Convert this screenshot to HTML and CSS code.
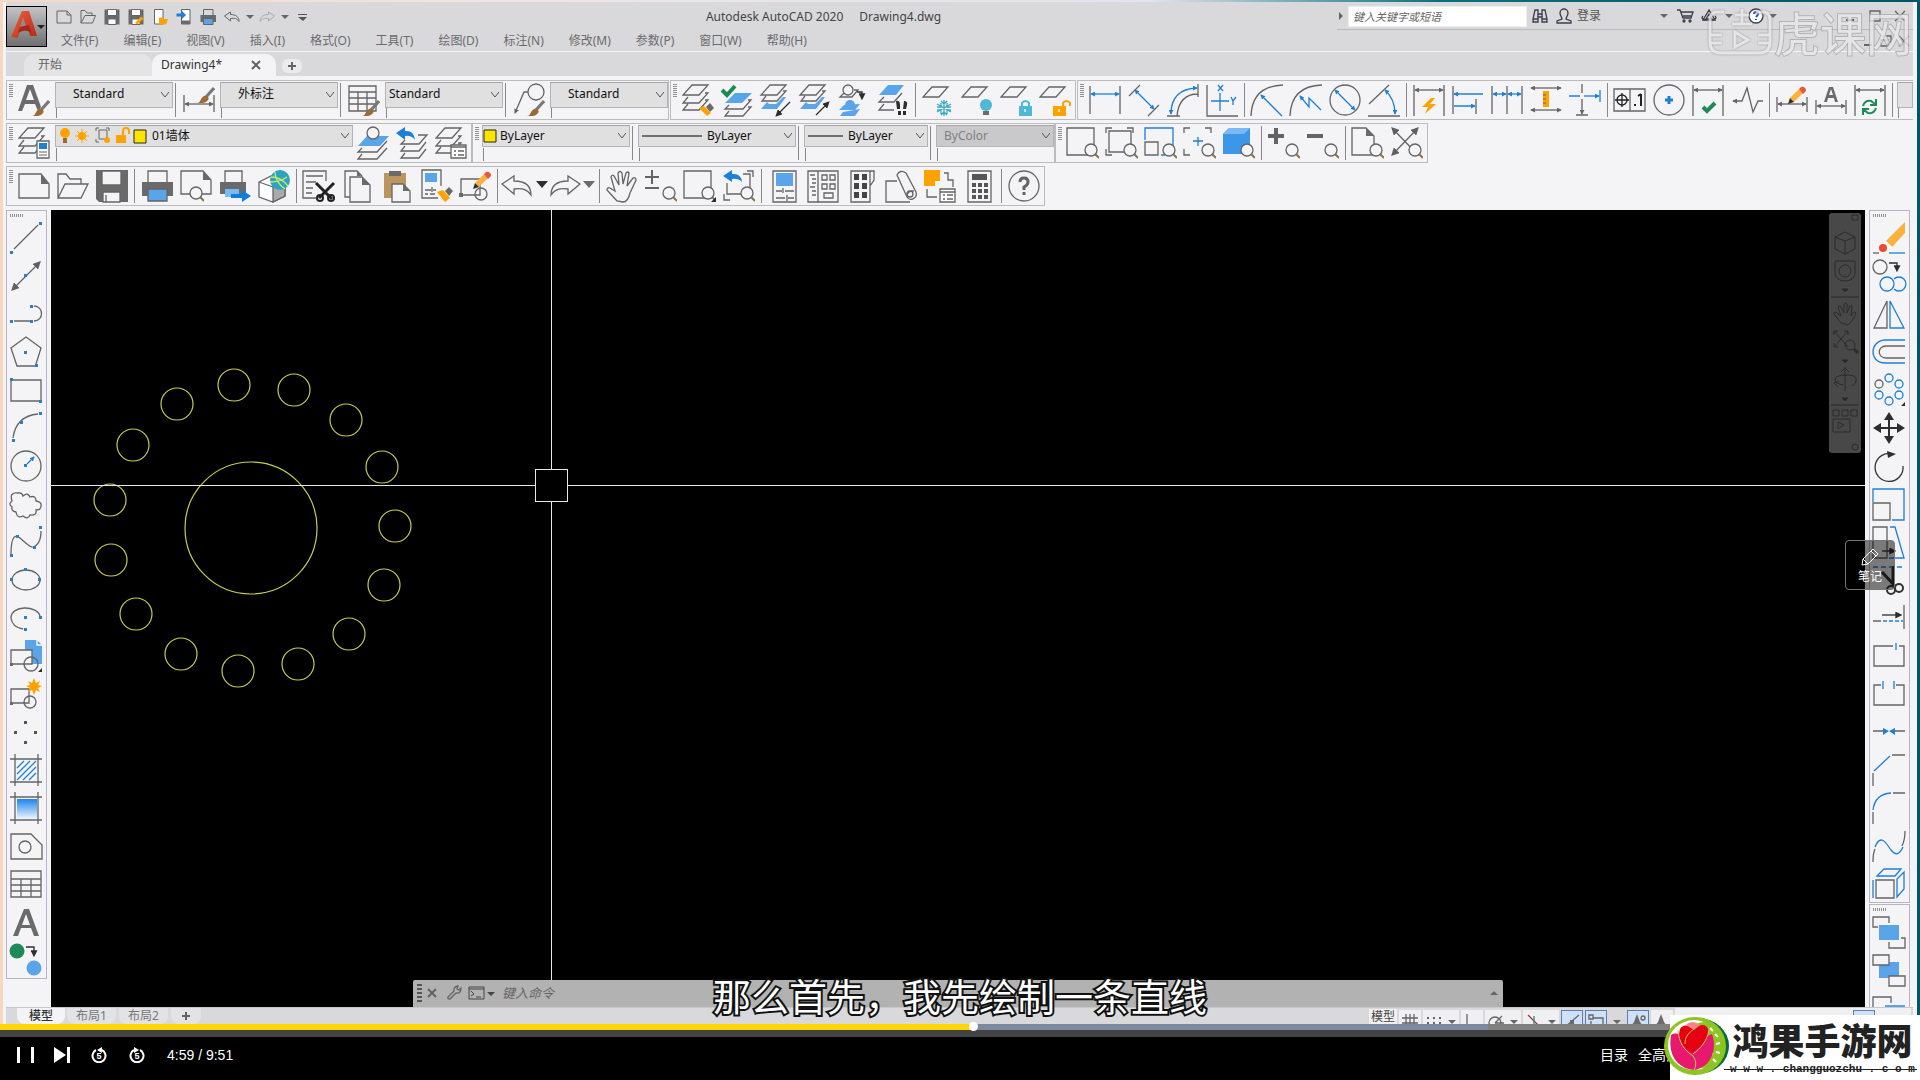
FILE: index.html
```html
<!DOCTYPE html>
<html lang="zh-CN">
<head>
<meta charset="utf-8">
<title>Autodesk AutoCAD 2020 - Drawing4.dwg</title>
<link rel="stylesheet" href="styles.css">
</head>
<body>
<svg class="defs" aria-hidden="true">
  <defs>
    <marker id="ab" viewBox="0 0 6 6" refX="5" refY="3" markerWidth="5" markerHeight="5" markerUnits="userSpaceOnUse" orient="auto-start-reverse"><path d="M0 0L6 3L0 6z" fill="#1c7fd8" stroke="none"/></marker>
    <marker id="ag" viewBox="0 0 6 6" refX="5" refY="3" markerWidth="5" markerHeight="5" markerUnits="userSpaceOnUse" orient="auto-start-reverse"><path d="M0 0L6 3L0 6z" fill="#646464" stroke="none"/></marker>
    <marker id="ak" viewBox="0 0 6 6" refX="4" refY="3" markerWidth="7" markerHeight="7" markerUnits="userSpaceOnUse" orient="auto-start-reverse"><path d="M0 0L6 3L0 6z" fill="#2d2d2d" stroke="none"/></marker>
    <marker id="am" viewBox="0 0 6 6" refX="4" refY="3" markerWidth="8" markerHeight="8" markerUnits="userSpaceOnUse" orient="auto-start-reverse"><path d="M0 0L6 3L0 6z" fill="#606060" stroke="none"/></marker>
    <linearGradient id="grad" x1="0" y1="0" x2="0" y2="1"><stop offset="0" stop-color="#1c86ee"/><stop offset="1" stop-color="#eef5fd"/></linearGradient>
    <linearGradient id="red" x1="0" y1="0" x2="1" y2="1"><stop offset="0" stop-color="#f0603c"/><stop offset="1" stop-color="#b52a1a"/></linearGradient>
  </defs>
  <symbol id="mag" viewBox="0 0 32 32"><circle cx="24" cy="23" r="6" fill="#f4f4f6"/><path d="M28 27l1 1"/><path d="M28 27l4 4" stroke="#8a7350" stroke-width="2"/></symbol>
  <symbol id="stack" viewBox="0 0 32 32"><path d="M10 1h16l-9 10H1zM6 13l-5 6h16l9-10h-3M6 20l-5 6h16l9-10h-3"/></symbol>
  <symbol id="brush" viewBox="0 0 32 32"><path d="M31 17l-8 9" stroke="#777" stroke-width="3"/><path d="M14 32c4 0 3-5 7-7c3-1 6 2 4 4c-3 4-8 3-11 3z" fill="#9b6a35" stroke="none"/></symbol>
  <symbol id="sheet" viewBox="0 0 32 32"><path d="M10 3h16l-9 10H1z"/></symbol>
  <symbol id="printer" viewBox="0 0 32 32"><path d="M7 13V1h19v12"/><path d="M1 12h31v14h-6v-7H7v7H1z" class="g"/><path d="M7 19h19v12H7z" fill="#5aa5ea"/></symbol>
  <symbol id="pencil" viewBox="0 0 32 32"><path d="M13 12l9-9 4 4-9 9z" fill="#fbb23c" stroke="none"/><path d="M22 3l2-2q2-1 4 1t0 4l-2 2z" fill="#e9553f" stroke="none"/><path d="M13 12l4 4-6 2z" class="k"/></symbol>
  <symbol id="undo" viewBox="0 0 32 32"><path d="M1 14L13 6v5c11 0 17 5 17 14c-4-6-9-7-17-6v5z"/></symbol>
  <symbol id="tri" viewBox="0 0 8 8"><path d="M0 2h8L4 6z" fill="currentColor" stroke="none"/></symbol>
  <symbol id="clock" viewBox="0 0 16 16"><path d="M5 3A6.500 6.500 0 1 0 11 3" fill="none" stroke="#fff" stroke-width="2"/><path d="M11 0v6L6 3z" fill="#fff" stroke="none"/></symbol>
</svg>

<main class="app">
  <header class="titlebar">
    <button class="logo" aria-label="应用程序菜单"><svg viewBox="0 0 39 39"><path d="M4 30L15 4h7l8 25h-7l-2-7-8 1-2 8z" fill="url(#red)"/><path d="M16 10l3 9-6 1z" fill="#8d8d8f"/><path d="M13 20l9-2 3 9c-4-4-8-4-14-1z" fill="#a52a1c"/><path d="M30 18h8l-4 4z" fill="#222"/></svg></button>
    <div class="bars">
      <div class="topbar">
        <nav class="qat">
          <button aria-label="新建"><svg class="i s" viewBox="0 0 32 32"><path d="M2 4h20l8 8v16H2zM22 4v8h8"/></svg></button>
          <button aria-label="打开"><svg class="i s" viewBox="0 0 32 32"><path d="M2 28V3h8l4 5h10v5M2 28l8-15h21l-6 15z"/></svg></button>
          <button aria-label="保存"><svg class="i s" viewBox="0 0 32 32"><path d="M1 1h30v30H1z" class="g"/><path d="M7 1h18v12H7zM8 20h16v11H8z" fill="#fff"/></svg></button>
          <button aria-label="另存为"><svg class="i s" viewBox="0 0 32 32"><path d="M1 1h30v30H1z" class="g"/><path d="M7 1h18v12H7zM8 20h16v11H8z" fill="#fff"/><path d="M14 28l12-13 5 4-12 12z" class="o"/></svg></button>
          <button aria-label="从移动设备打开"><svg class="i s" viewBox="0 0 32 32"><path d="M5 1h17v29H5z" fill="#fff"/><path d="M14 17h6l2 3h10l-4 11H14z" class="o"/></svg></button>
          <button aria-label="保存到移动设备"><svg class="i s" viewBox="0 0 32 32"><path d="M11 1h17v29H11z" fill="#fff"/><path d="M11 23h17v7H11z" class="g"/><path d="M1 9h11V4l8 8-8 8v-5H1z" fill="#1c7fd8" stroke="none"/></svg></button>
          <button aria-label="打印"><svg class="i s"><use href="#printer"/></svg></button>
          <button aria-label="放弃"><svg class="i s"><use href="#undo"/></svg></button>
          <button class="mini" aria-label="放弃列表"><svg class="t"><use href="#tri"/></svg></button>
          <button class="dim" aria-label="重做"><svg class="i s flip"><use href="#undo"/></svg></button>
          <button class="mini" aria-label="重做列表"><svg class="t"><use href="#tri"/></svg></button>
          <button aria-label="自定义"><svg class="i s" viewBox="0 0 16 16"><path d="M4 5h9v1H4zM4 8h9l-4 4z" fill="#555" stroke="none"/></svg></button>
        </nav>
        <h1 class="title"><span>Autodesk AutoCAD 2020</span><span>Drawing4.dwg</span></h1>
        <div class="info">
          <svg class="t turn"><use href="#tri"/></svg>
          <input class="search" type="text" aria-label="搜索" placeholder="键入关键字或短语">
          <button aria-label="搜索"><svg class="i s n" viewBox="0 0 16 16"><path d="M3 2h3v4h4V2h3l2 9v3h-5V9H6v5H1v-3z"/><path d="M1 11h5M10 11h5M6 6v3M10 6v3"/></svg></button>
          <button class="login"><svg class="i s n" viewBox="0 0 16 16"><path d="M8 1a4 4 0 0 1 4 4c0 3-2 4-2 6l5 2v2H1v-2l5-2c0-2-2-3-2-6a4 4 0 0 1 4-4z"/></svg>登录</button>
          <svg class="t"><use href="#tri"/></svg>
          <div class="apps">
            <button aria-label="购物车"><svg class="i s n" viewBox="0 0 16 16"><path d="M0 2h3l3 8h8l2-6H4M6 8h8"/><circle cx="7" cy="13" r="1"/><circle cx="13" cy="13" r="1"/></svg></button>
            <button aria-label="Autodesk A360"><svg class="i s n" viewBox="0 0 16 16"><path d="M8 2l6 10H2zM8 6l3 5H5z"/><path d="M2 8q-3 3 3 4M14 8q3 3-3 4"/></svg></button>
            <svg class="t"><use href="#tri"/></svg>
          </div>
          <button aria-label="帮助" class="help"><svg class="i s n" viewBox="0 0 16 16"><circle cx="8" cy="8" r="7" fill="#fff"/><path d="M6 6q0-2 2-2t2 2q0 1-2 3M8 11v1" stroke="#2b5cb5" stroke-width="2"/></svg></button>
          <svg class="t"><use href="#tri"/></svg>
          <div class="win">
            <button aria-label="最小化"><svg class="i x" viewBox="0 0 12 12"><path d="M2 10h8" stroke-width="2"/></svg></button>
            <button aria-label="最大化"><svg class="i x" viewBox="0 0 12 12"><path d="M1 1h10v10H1z"/></svg></button>
            <button aria-label="关闭"><svg class="i x" viewBox="0 0 12 12"><path d="M1 1l10 10M11 1L1 11"/></svg></button>
          </div>
        </div>
      </div>
      <nav class="menu">
        <button>文件(F)</button><button>编辑(E)</button><button>视图(V)</button><button>插入(I)</button><button>格式(O)</button><button>工具(T)</button><button>绘图(D)</button><button>标注(N)</button><button>修改(M)</button><button>参数(P)</button><button>窗口(W)</button><button>帮助(H)</button>
        <div class="mdi">
          <button aria-label="最小化图形"><svg class="i x" viewBox="0 0 12 12"><path d="M2 10h8" stroke-width="2"/></svg></button>
          <button aria-label="还原图形"><svg class="i x" viewBox="0 0 12 12"><path d="M1 5h7v6H1zM4 5V1h7v6H8"/></svg></button>
          <button aria-label="关闭图形"><svg class="i x" viewBox="0 0 12 12"><path d="M1 1l10 10M11 1L1 11"/></svg></button>
        </div>
      </nav>
    </div>
  </header>

  <nav class="tabs">
    <button class="tab">开始</button>
    <button class="tab on"><span>Drawing4*</span><svg class="i x" viewBox="0 0 12 12"><path d="M2 2l8 8M10 2l-8 8" stroke-width="2"/></svg></button>
    <button class="add" aria-label="新图形"><svg class="i x" viewBox="0 0 12 12"><path d="M6 2v8M2 6h8" stroke-width="2"/></svg></button>
  </nav>

  <section class="docks">
    <div class="row">
      <div class="bar">
        <i class="grip"></i>
        <button class="tb" aria-label="文字样式"><svg class="i" viewBox="0 0 32 32"><path d="M0 27L9 1h6l8 22-3 4-3-7H7l-3 7zM8 16h8L12 5z" class="g"/><use href="#brush"/></svg></button>
        <div class="combo w119 p18"><select aria-label="文字样式"><option>Standard</option></select></div><i class="sep w7"></i>
        <button class="tb" aria-label="标注样式"><svg class="i" viewBox="0 0 32 32"><path d="M1 11v17M31 11v17"/><path d="M2 20h28" class="ag2"/><g transform="translate(0 -13)"><use href="#brush"/></g></svg></button>
        <div class="combo w119 p18"><select aria-label="标注样式"><option>外标注</option></select></div><i class="sep w7"></i>
        <button class="tb" aria-label="表格样式"><svg class="i" viewBox="0 0 32 32"><path d="M1 2h27v25H1zM1 8h27M1 14h27M1 20h27M10 8v19M19 8v19"/><use href="#brush"/></svg></button>
        <div class="combo w119 p4"><select aria-label="表格样式"><option>Standard</option></select></div><i class="sep w7"></i>
        <button class="tb" aria-label="多重引线样式"><svg class="i" viewBox="0 0 32 32"><circle cx="23" cy="8" r="8"/><path d="M15 8h-4L2 29" class="ag1"/><use href="#brush"/></svg></button>
        <div class="combo w119 p18"><select aria-label="多重引线样式"><option>Standard</option></select></div>
      </div>
      <div class="bar">
        <i class="grip"></i>
        <button class="tb" aria-label="图层匹配"><svg class="i" viewBox="0 0 32 32"><use href="#stack"/><path d="M24 23l4-4 4 5-4 4z" class="g"/><path d="M17 24l5-2 7 7-4 3z" class="o"/></svg></button>
        <button class="tb" aria-label="置为当前"><svg class="i" viewBox="0 0 32 32"><path d="M1 6l5 5 8-9" stroke="#1e8a5a" stroke-width="4"/><path d="M14 9h17L21 19H4z" class="f"/><path d="M8 21l-4 4h18l8-9h-3M8 27l-4 5h18l8-9h-3"/></svg></button>
        <button class="tb" aria-label="上一个"><svg class="i" viewBox="0 0 32 32"><path d="M10 1h16l-9 10H1zM6 12l-4 5h15l9-10h-3"/><path d="M7 18l-6 7h16l9-12h-3l-7 7H9z" class="f"/><path d="M30 18L17 31" class="ak1"/></svg></button>
        <button class="tb" aria-label="更改为当前图层"><svg class="i" viewBox="0 0 32 32"><path d="M10 1h16l-9 10H1zM6 12l-4 5h15l9-10h-3"/><path d="M7 18l-6 7h16l9-12h-3l-7 7H9z" class="f"/><path d="M17 31l12-12" class="ak1"/></svg></button>
        <button class="tb" aria-label="复制到新图层"><svg class="i" viewBox="0 0 32 32"><circle cx="10" cy="6" r="5"/><path d="M6 9l-4 4h12l6-7h-4"/><path d="M19 8h5v6" class="ak1"/><circle cx="12" cy="21" r="5" class="f"/><path d="M7 21H6l-5 5h16l5-6M5 28l-3 4h15l5-7" class="f"/></svg></button>
        <button class="tb" aria-label="图层漫游"><svg class="i" viewBox="0 0 32 32"><path d="M11 1h16l-8 10H2z" class="f"/><path d="M7 13l-5 5h15l8-9M7 20l-5 6h15"/><path d="M19 17q4-1 4 4v4h-3zM27 17q4 0 3 4l-1 4h-3zM21 27h3v4h-3zM26 27h3v4h-3z" class="k"/></svg></button>
        <i class="sep"></i>
        <button class="tb" aria-label="冻结图层"><svg class="i" viewBox="0 0 32 32"><use href="#sheet"/><path d="M22 16v16M15 20l14 8M29 20l-14 8M19 17l3 3 3-3M19 31l3-3 3 3M15 23h4v-4M29 23h-4v-4M15 26h4v4M29 26h-4v4" stroke="#39abc9"/></svg></button>
        <button class="tb" aria-label="关闭图层"><svg class="i" viewBox="0 0 32 32"><use href="#sheet"/><circle cx="25" cy="21" r="6" fill="#4fb7d8" stroke="none"/><path d="M22 27h6v4h-6z" class="g"/></svg></button>
        <button class="tb" aria-label="锁定图层"><svg class="i" viewBox="0 0 32 32"><use href="#sheet"/><path d="M19 22h13v10H19z" fill="#4fb7d8" stroke="none"/><path d="M22 22v-3a4 4 0 0 1 7 0v3" stroke="#4fb7d8" stroke-width="2"/><path d="M25 25v3" stroke="#fff"/></svg></button>
        <button class="tb" aria-label="解锁图层"><svg class="i" viewBox="0 0 32 32"><use href="#sheet"/><path d="M14 22h13v10H14z" class="o"/><path d="M24 22v-3a4 4 0 0 1 7 0v3" stroke="#ffa200" stroke-width="2"/><path d="M20 25v3" stroke="#fff"/></svg></button>
      </div>
      <div class="bar grow">
        <i class="grip"></i>
        <button class="tb" aria-label="线性"><svg class="i" viewBox="0 0 32 32"><path d="M1 2v28M31 2v28"/><path d="M2 10h28" class="b ab2"/></svg></button>
        <button class="tb" aria-label="对齐"><svg class="i" viewBox="0 0 32 32"><path d="M1 12L12 1M20 32l11-11"/><path d="M7 6l19 19" class="b ab2"/></svg></button>
        <button class="tb" aria-label="弧长"><svg class="i" viewBox="0 0 32 32"><path d="M31 0v13M31 10Q12 10 10 32M0 32h13"/><path d="M30 4Q4 5 4 30" class="b ab2"/></svg></button>
        <button class="tb" aria-label="坐标"><svg class="i" viewBox="0 0 32 32"><path d="M1 1v31h31"/><path d="M14 9v18M5 17h18M12 1l5 6M17 1l-5 6M25 13l2 4 3-4M27 17v4" class="b"/></svg></button>
        <i class="sep"></i>
        <button class="tb" aria-label="半径"><svg class="i" viewBox="0 0 32 32"><path d="M0 32Q1 2 32 1"/><path d="M31 32L10 11" class="b ab1"/></svg></button>
        <button class="tb" aria-label="折弯"><svg class="i" viewBox="0 0 32 32"><path d="M0 32Q1 2 32 1"/><path d="M31 26L19 14v9l-9-11" class="b ab1"/></svg></button>
        <button class="tb" aria-label="直径"><svg class="i" viewBox="0 0 32 32"><circle cx="16" cy="16" r="15"/><path d="M6 6l20 20" class="b ab2"/></svg></button>
        <button class="tb" aria-label="角度"><svg class="i" viewBox="0 0 32 32"><path d="M1 20L21 1M0 32h32"/><path d="M17 6q10 9 10 24" class="b ab2"/></svg></button>
        <i class="sep"></i>
        <button class="tb" aria-label="快速标注"><svg class="i" viewBox="0 0 32 32"><path d="M1 1v31M31 1v31"/><path d="M2 6h28" class="ag2"/><path d="M18 14l-9 9h6l-3 7 11-10h-6l5-6z" class="o"/></svg></button>
        <button class="tb" aria-label="基线"><svg class="i" viewBox="0 0 32 32"><path d="M1 2v28M24 15v15"/><path d="M2 10h29M2 22h21" class="b ab2"/></svg></button>
        <button class="tb" aria-label="连续"><svg class="i" viewBox="0 0 32 32"><path d="M1 2v28M16 2v28M31 2v28"/><path d="M2 10h13" class="b ab2"/><path d="M17 10h13" class="b ab2"/></svg></button>
        <button class="tb" aria-label="等距标注"><svg class="i" viewBox="0 0 32 32"><path d="M1 4h30" class="ag2"/><path d="M1 26h30" class="ag2"/><path d="M13 7h6v16h-6z" class="o"/><path d="M13 11h3M13 15h3M13 19h3" stroke-width="1"/></svg></button>
        <button class="tb" aria-label="打断标注"><svg class="i" viewBox="0 0 32 32"><path d="M13 0v9M7 31h12"/><path d="M13 15v15" class="ag1"/><path d="M0 12h11M31 6v12" class="b"/><path d="M15 12h15" class="b ab1"/></svg></button>
        <i class="sep"></i>
        <button class="tb" aria-label="公差"><svg class="i" viewBox="0 0 32 32"><path d="M0 5h31v22H0zM16 5v22"/><circle cx="8" cy="16" r="5" stroke="#222"/><path d="M8 9v14M1 16h14" stroke="#222"/><path d="M21 20v2M27 10v12M24 12l3-2" stroke="#222" stroke-width="2"/></svg></button>
        <button class="tb" aria-label="圆心标记"><svg class="i" viewBox="0 0 32 32"><circle cx="16" cy="16" r="15"/><path d="M16 12v8M12 16h8" class="b" stroke-width="3"/></svg></button>
        <button class="tb" aria-label="检验"><svg class="i" viewBox="0 0 32 32"><path d="M1 1v31M31 1v31"/><path d="M2 6h28" class="ag2"/><path d="M11 23l4 4 8-8" stroke="#1e8a5a" stroke-width="4"/></svg></button>
        <button class="tb" aria-label="折弯线性"><svg class="i" viewBox="0 0 32 32"><path d="M32 17h-5l-5 11-6-24-5 13H2" class="ag1"/></svg></button>
        <i class="sep"></i>
        <button class="tb" aria-label="编辑标注"><svg class="i" viewBox="0 0 32 32"><path d="M1 13v15M31 13v15"/><path d="M2 20h28" class="ag2"/><g transform="translate(1 2)"><use href="#pencil"/></g></svg></button>
        <button class="tb" aria-label="编辑标注文字"><svg class="i" viewBox="0 0 32 32"><path d="M1 16v14M31 16v14"/><path d="M2 22h28" class="ag2"/><path d="M9 18l5-15h4l5 15h-3l-1-4h-6l-1 4zM14 11h4l-2-6z" class="g"/></svg></button>
        <button class="tb" aria-label="标注更新"><svg class="i" viewBox="0 0 32 32"><path d="M1 1v31M31 1v31"/><path d="M2 6h28" class="ag2"/><path d="M9 22q2-6 8-5l4 3M22 24q-2 6-8 5l-4-3M22 15v6h-6M9 31v-6h6" stroke="#1e8a5a" stroke-width="2"/></svg></button>
        <i class="sep"></i>
        <div class="combo last"><select aria-label="标注样式控制" class="bare"><option></option></select></div>
      </div>
    </div>

    <div class="row tight">
      <div class="bar">
        <i class="grip"></i>
        <button class="tb" aria-label="图层特性"><svg class="i" viewBox="0 0 32 32"><use href="#stack"/><path d="M19 14h12v17H19z" fill="#fff"/><path d="M21 16h8v6h-8z" fill="#1c7fd8" stroke="none"/><path d="M21 25h8M21 28h8" stroke-width="1"/></svg></button>
        <div class="combo low w299 layer"><svg class="lay" viewBox="0 0 90 20"><circle cx="9" cy="7" r="5" class="o"/><path d="M7 12h4v5H7z" fill="#a06a2c"/><circle cx="26" cy="10" r="4" class="o"/><path d="M26 3v14M19 10h14M21 5l10 10M31 5L21 15" stroke="#ffa200"/><path d="M43 2h-3v3M50 2h3v3M40 13v3h3M43 4h8v9h-8z" stroke="#666" fill="none"/><circle cx="51" cy="14" r="3" class="o"/><path d="M60 9h10v8H60z" class="o"/><path d="M67 9V5a3 3 0 0 1 6 0v3" stroke="#ffa200" stroke-width="2" fill="none"/><path d="M78 4h12v13H78z" fill="#fde500" stroke="#222"/></svg><select aria-label="图层"><option>01墙体</option></select></div>
        <button class="tb" aria-label="将对象图层置为当前"><svg class="i" viewBox="0 0 32 32"><path d="M10 9h22L23 19H1z" class="f"/><circle cx="16" cy="6" r="6" fill="#f4f4f6"/><path d="M5 21l-4 4h19l10-11M5 27l-4 5h19l10-11"/></svg></button>
        <button class="tb" aria-label="上一个图层"><svg class="i" viewBox="0 0 32 32"><path d="M0 6l9-6v4q9-1 10 9-4-5-10-4v4z" fill="#1c7fd8" stroke="none"/><path d="M22 8h9l-8 9H5l4-4M9 19l-4 5h18l7-9M9 26l-4 5h18l7-9"/></svg></button>
        <button class="tb" aria-label="图层状态管理器"><svg class="i" viewBox="0 0 32 32"><use href="#stack"/><path d="M16 18h15v13H16z" fill="#fff"/><path d="M16 20h15M19 24h2M23 24h6M19 28h2M23 28h6"/></svg></button>
      </div>
      <div class="bar">
        <i class="grip"></i>
        <div class="combo low w149 p18"><svg class="chip" viewBox="0 0 14 14"><path d="M1 1h12v12H1z" fill="#fde500" stroke="#222"/></svg><select aria-label="颜色"><option>ByLayer</option></select></div><i class="sep w7"></i>
        <div class="combo low w159 p70"><svg class="line l60" viewBox="0 0 60 2"><path d="M0 1h60" stroke="#000"/></svg><select aria-label="线型"><option>ByLayer</option></select></div><i class="sep w7"></i>
        <div class="combo low w125 p44"><svg class="line l35" viewBox="0 0 35 2"><path d="M0 1h35" stroke="#000"/></svg><select aria-label="线宽"><option>ByLayer</option></select></div><i class="sep w7"></i>
        <div class="combo low w119 p9"><select aria-label="打印样式" disabled><option>ByColor</option></select></div>
      </div>
      <div class="bar">
        <i class="grip"></i>
        <button class="tb" aria-label="窗口缩放"><svg class="i" viewBox="0 0 32 32"><path d="M0 1h27v27H0z"/><use href="#mag"/></svg></button>
        <button class="tb" aria-label="动态缩放"><svg class="i" viewBox="0 0 32 32"><path d="M3 4h22v21H3zM0 6V1h6M21 1h6v5M0 22v6h6"/><use href="#mag"/></svg></button>
        <button class="tb" aria-label="比例缩放"><svg class="i" viewBox="0 0 32 32"><path d="M0 13V1h28v20M16 28h4" class="b"/><path d="M0 15h13v13H0z"/><use href="#mag"/></svg></button>
        <button class="tb" aria-label="中心缩放"><svg class="i" viewBox="0 0 32 32"><path d="M0 6V1h6M21 1h6v5M0 22v6h6"/><path d="M14 10v9M9 14h10" class="b"/><use href="#mag"/></svg></button>
        <button class="tb" aria-label="缩放对象"><svg class="i" viewBox="0 0 32 32"><path d="M0 7l6-6h21v20l-6 6H0z" fill="#3d97e8" stroke="none"/><path d="M0 7l6-6h21l-6 6z" fill="#7ab9f2" stroke="none"/><use href="#mag"/></svg></button>
        <i class="sep"></i>
        <button class="tb" aria-label="放大"><svg class="i" viewBox="0 0 32 32"><path d="M8 1v16M0 9h16" stroke-width="4"/><use href="#mag"/></svg></button>
        <button class="tb" aria-label="缩小"><svg class="i" viewBox="0 0 32 32"><path d="M0 9h16" stroke-width="4"/><use href="#mag"/></svg></button>
        <i class="sep"></i>
        <button class="tb" aria-label="全部缩放"><svg class="i" viewBox="0 0 32 32"><path d="M0 1h14l8 8v19H0z"/><path d="M14 1l8 8h-8z" class="g"/><use href="#mag"/></svg></button>
        <button class="tb" aria-label="范围缩放"><svg class="i" viewBox="0 0 32 32"><path d="M2 2l24 25" class="am2"/><path d="M26 2L2 27" class="am2"/><use href="#mag"/></svg></button>
      </div>
    </div>

    <div class="row">
      <div class="bar">
        <i class="grip"></i>
        <button class="tb" aria-label="新建"><svg class="i" viewBox="0 0 32 32"><path d="M1 4h22l8 10v14H1z"/><path d="M23 4l8 10h-8z" class="g"/></svg></button>
        <button class="tb" aria-label="打开"><svg class="i" viewBox="0 0 32 32"><path d="M1 28V4h8l4 5h11v5M1 28l7-14h23l-7 14z"/></svg></button>
        <button class="tb" aria-label="保存"><svg class="i" viewBox="0 0 32 32"><path d="M0 0h32v32H3l-3-3z" class="g"/><path d="M6 1h19v14H6zM7 22h17v10H7zM10 25v7" fill="#f4f4f6"/></svg></button>
        <i class="sep"></i>
        <button class="tb" aria-label="打印"><svg class="i"><use href="#printer"/></svg></button>
        <button class="tb" aria-label="打印预览"><svg class="i" viewBox="0 0 32 32"><path d="M1 1h22l8 9v14H1z"/><path d="M23 1l8 9h-8z" class="g"/><g transform="translate(-8 0)"><use href="#mag"/></g></svg></button>
        <button class="tb" aria-label="发布"><svg class="i" viewBox="0 0 32 32"><path d="M6 12V1h17v11"/><path d="M1 12h26v12H1z" class="g"/><path d="M6 19h14v8H6z" fill="#7ab9f2" stroke="none"/><path d="M12 24h11v-4l9 6-9 6v-4H12z" fill="#0d7de0" stroke="none"/></svg></button>
        <button class="tb" aria-label="三维打印"><svg class="i" viewBox="0 0 32 32"><path d="M1 12l12-6 14 6v14l-12 6L1 27z" fill="#fff"/><path d="M15 16l12-5v15l-12 6zM1 12l14 5" fill="#aaa"/><circle cx="22" cy="10" r="10" fill="#2aa4c4" stroke="none"/><path d="M13 7q10 0 17 9M17 2q0 10 10 17M12 12q10 0 17-5" stroke="#cde95e"/></svg></button>
        <i class="sep"></i>
        <button class="tb" aria-label="剪切"><svg class="i" viewBox="0 0 32 32"><path d="M14 28H0V1h23v10M3 6h17M3 12h10M3 18h7M3 23h6"/><path d="M13 13l16 16M31 13L16 28" stroke="#222" stroke-width="3"/><circle cx="17" cy="28" r="3" stroke="#222" stroke-width="2"/><circle cx="28" cy="28" r="3" stroke="#222" stroke-width="2"/></svg></button>
        <button class="tb" aria-label="复制"><svg class="i" viewBox="0 0 32 32"><path d="M8 27H3V1h12l5 5M8 7h12l8 8v17H8z"/><path d="M15 1l4 5h-4zM20 7l8 8h-8z" class="g"/></svg></button>
        <button class="tb" aria-label="粘贴"><svg class="i" viewBox="0 0 32 32"><path d="M3 3h22v25H3z" fill="#bb9560" stroke="none"/><path d="M8 1h12v5H8z" class="g"/><path d="M11 14h11l7 7v11H11z" fill="#f4f4f6"/><path d="M22 14l7 7h-7z" class="g"/></svg></button>
        <button class="tb" aria-label="特性匹配"><svg class="i" viewBox="0 0 32 32"><path d="M18 28H2V0h19v16M5 20h6M13 20h3M5 24h3M10 24h5M12 17v5"/><path d="M5 3h12v9H5z" class="f"/><path d="M25 21l4-4 4 4-4 5z" class="g"/><path d="M17 22l6-2 7 8-5 4z" class="o"/></svg></button>
        <button class="tb" aria-label="块编辑器"><svg class="i" viewBox="0 0 32 32"><path d="M2 9h19v16H2z"/><circle cx="22" cy="24" r="6"/><path d="M0 23h4v4H0z" class="g"/><g transform="translate(3 1)"><use href="#pencil"/></g></svg></button>
        <i class="sep"></i>
        <button class="wide" aria-label="放弃"><svg class="i w48" viewBox="0 0 48 32"><use href="#undo" width="32" height="32"/><path d="M35 11h12l-6 7z" class="k"/></svg></button>
        <button class="wide" aria-label="重做"><svg class="i w48" viewBox="0 0 48 32"><g transform="matrix(-1 0 0 1 32 0)"><use href="#undo" width="32" height="32"/></g><path d="M34 11h12l-6 7z" class="g"/></svg></button>
        <i class="sep"></i>
        <button class="tb" aria-label="平移"><svg class="i" viewBox="0 0 32 32"><path d="M11 31L1 20q0-3 3-2l5 3L5 7q1-3 3-1l5 9L12 3q2-3 4 0l1 11 3-11q2-2 3 0l-2 13 6-8q3-1 3 2l-6 13q-2 9-7 9z"/></svg></button>
        <button class="tb" aria-label="实时缩放"><svg class="i" viewBox="0 0 32 32"><path d="M7 0v14M0 7h14M0 18h14" stroke-width="2"/><use href="#mag"/></svg></button>
        <button class="tb" aria-label="窗口缩放"><svg class="i" viewBox="0 0 32 32"><path d="M0 1h27v27H0z"/><use href="#mag"/><path d="M32 27v5h-5z" class="k"/></svg></button>
        <button class="tb" aria-label="缩放上一个"><svg class="i" viewBox="0 0 32 32"><path d="M0 6l9-6v4q9-1 10 8-4-4-10-3v3z" fill="#1c7fd8" stroke="none"/><path d="M20 4h7v20H4V13M24 1h6v6M1 24v6h6"/><use href="#mag"/></svg></button>
        <i class="sep"></i>
        <button class="tb" aria-label="特性"><svg class="i" viewBox="0 0 32 32"><path d="M5 1h23v31H5zM8 21h6M17 21h9M8 28h9M20 28h6M15 18v5M19 25v6"/><path d="M8 3h17v13H8z" class="f"/></svg></button>
        <button class="tb" aria-label="设计中心"><svg class="i" viewBox="0 0 32 32"><path d="M1 1h30v31H1zM11 1v31M3 5h5M5 9h4M5 13h4M3 17h5M5 21h4M5 25h4M15 5h5v5h-5zM23 5h5v5h-5zM15 14h5v5h-5zM23 14h5v5h-5zM17 23h9v5h-9z"/></svg></button>
        <button class="tb" aria-label="工具选项板"><svg class="i" viewBox="0 0 32 32"><path d="M5 1h19v31H5zM24 1h4v9l-4 6"/><path d="M8 4h5v6H8zM16 4h5v6h-5zM8 13h5v6H8zM16 13h5v6h-5zM8 22h5v6H8zM16 22h5v6h-5z" fill="#444" stroke="none"/></svg></button>
        <button class="tb" aria-label="图纸集管理器"><svg class="i" viewBox="0 0 32 32"><path d="M12 11H1v21h24M12 5q3-6 9-2l10 19c2 6-6 10-9 5zM29 21q-5-1-7 4"/><circle cx="25" cy="24" r="3"/></svg></button>
        <button class="tb" aria-label="标记集管理器"><svg class="i" viewBox="0 0 32 32"><path d="M20 3h4v7h5v7M3 19v8h10"/><path d="M0 0h16v11l-5 5H0z" class="o"/><path d="M11 16v-5h5z" fill="#fff" stroke="none"/><path d="M16 19h15v13H16zM16 22h15M19 25h2M23 25h6M19 29h2M23 29h6" fill="#fff"/></svg></button>
        <button class="tb" aria-label="快速计算器"><svg class="i" viewBox="0 0 32 32"><path d="M5 1h23v31H5z"/><path d="M9 4h15v6H9zM9 13h4v4H9zM15 13h4v4h-4zM21 13h4v4h-4zM9 19h4v4H9zM15 19h4v4h-4zM21 19h4v4h-4zM9 25h4v4H9zM15 25h4v4h-4zM21 25h4v4h-4z" fill="#555" stroke="none"/></svg></button>
        <i class="sep"></i>
        <button class="tb" aria-label="帮助"><svg class="i" viewBox="0 0 32 32"><circle cx="16" cy="16" r="15"/><path d="M12 12q0-4 4-4t4 4q0 3-4 5v3M16 22v3" stroke-width="3"/></svg></button>
      </div>
    </div>
  </section>

  <section class="work">
    <aside class="side">
      <div class="vbar">
        <i class="hgrip"></i>
        <button aria-label="直线"><svg class="i" viewBox="0 0 32 32"><path d="M4 27L28 3"/><path d="M0 29h3v3H0zM29 0h3v3h-3z" class="q"/></svg></button>
        <button aria-label="构造线"><svg class="i" viewBox="0 0 32 32"><path d="M3 29L29 3" class="am2"/><path d="M14 14h3v3h-3z" class="q"/></svg></button>
        <button aria-label="多段线"><svg class="i" viewBox="0 0 32 32"><path d="M4 23h16M24 8c10 0 10 15 0 15"/><path d="M0 22h3v3H0zM20 22h3v3h-3zM20 7h3v3h-3z" class="q"/></svg></button>
        <button aria-label="多边形"><svg class="i" viewBox="0 0 32 32"><path d="M25 30H7L1 12 16 1l15 11-5 16"/><path d="M14 15h3v3h-3zM25 28h3v3h-3z" class="q"/></svg></button>
        <button aria-label="矩形"><svg class="i" viewBox="0 0 32 32"><path d="M1 6h30v21H1z"/><path d="M0 4h3v3H0zM29 26h3v3h-3z" class="q"/></svg></button>
        <button aria-label="圆弧"><svg class="i" viewBox="0 0 32 32"><path d="M3 26Q6 4 28 2"/><path d="M2 27h3v3H2zM10 9h3v3h-3zM29 0h3v3h-3z" class="q"/></svg></button>
        <button aria-label="圆"><svg class="i" viewBox="0 0 32 32"><circle cx="16" cy="16" r="15"/><path d="M17 14l7-7" class="b ab1"/><path d="M14 14h3v3h-3z" class="q"/></svg></button>
        <button aria-label="修订云线"><svg class="i" viewBox="0 0 32 32"><path d="M2 13q-3-9 6-8 4-1 5 3 5-4 7 1 6-2 6 4 6 1 5 5 0 4-5 4 1 6-6 5-2 5-7 1-6 3-7-4-5-1-4-5-4-3 0-6z"/></svg></button>
        <button aria-label="样条曲线"><svg class="i" viewBox="0 0 32 32"><path d="M1 28C1 8 6 9 10 12S21 23 24 21 31 16 31 5"/><path d="M0 28h3v3H0zM6 9h3v3H6zM23 20h3v3h-3zM29 0h3v3h-3z" class="q"/></svg></button>
        <button aria-label="椭圆"><svg class="i" viewBox="0 0 32 32"><ellipse cx="16" cy="16" rx="14" ry="10"/><path d="M0 14h3v3H0zM14 4h3v3h-3zM28 14h3v3h-3z" class="q"/></svg></button>
        <button aria-label="椭圆弧"><svg class="i" viewBox="0 0 32 32"><path d="M30 14C27 3 1 3 1 16q1 9 12 11"/><path d="M14 14h3v3h-3zM29 14h3v3h-3zM14 26h3v3h-3z" class="q"/></svg></button>
        <button aria-label="插入块"><svg class="i" viewBox="0 0 32 32"><path d="M15 0h12l5 5v19H22V10h-7z" class="f"/><path d="M27 0v5h5" stroke="#fff"/><path d="M1 10h21v14H1z"/><circle cx="21" cy="24" r="7"/><path d="M0 23h3v3H0z" class="g"/><path d="M32 28v4h-4z" class="k"/></svg></button>
        <button aria-label="创建块"><svg class="i" viewBox="0 0 32 32"><path d="M1 11h18v14H1z"/><circle cx="20" cy="24" r="6"/><path d="M0 24h3v3H0z" class="g"/><path d="M24 0l2 5 4-2-2 4 4 1-4 2 2 4-4-2-2 5-2-5-4 2 2-4-4-2 4-1-2-4 4 2z" class="o"/></svg></button>
        <button aria-label="点"><svg class="i" viewBox="0 0 32 32"><path d="M14 5h3v3h-3zM4 15h3v3H4zM24 15h3v3h-3zM14 25h3v3h-3z" fill="#555" stroke="none"/></svg></button>
        <button aria-label="图案填充"><svg class="i" viewBox="0 0 32 32"><path d="M0 5h32M0 28h32M5 0v32M28 0v32"/><path d="M7 14l7-7M7 20L20 7M7 26L26 7M13 26l13-13M19 26l7-7" class="b"/></svg></button>
        <button aria-label="渐变色"><svg class="i" viewBox="0 0 32 32"><path d="M0 5h32M0 28h32M5 0v32M28 0v32"/><path d="M7 7h20v20H7z" fill="url(#grad)" stroke="none"/></svg></button>
        <button aria-label="面域"><svg class="i" viewBox="0 0 32 32"><path d="M1 4h20l11 11v14H1z"/><circle cx="15" cy="17" r="6"/></svg></button>
        <button aria-label="表格"><svg class="i" viewBox="0 0 32 32"><path d="M1 3h30v26H1zM1 11h30M1 17h30M1 23h30M11 11v18M21 11v18"/></svg></button>
        <button aria-label="多行文字"><svg class="i" viewBox="0 0 32 32"><path d="M3 30L14 3h5l10 27h-5l-3-8H11l-3 8zM12 19h8L16 8z" class="g"/></svg></button>
        <button aria-label="添加选定对象"><svg class="i" viewBox="0 0 32 32"><circle cx="7" cy="7" r="7.500" fill="#1e8a5a" stroke="none"/><circle cx="24" cy="24" r="7.500" class="f"/><path d="M16 3h8v8" class="ak1"/></svg></button>
      </div>
    </aside>

    <div class="canvas">
      <svg class="drawing" role="img" aria-label="图形窗口">
        <g class="circles">
          <circle cx="200" cy="318" r="66"/>
          <circle cx="183" cy="175" r="16"/><circle cx="243" cy="180" r="16"/><circle cx="295" cy="210" r="16"/><circle cx="331" cy="257" r="16"/><circle cx="344" cy="316" r="16"/><circle cx="333" cy="375" r="16"/><circle cx="298" cy="424" r="16"/><circle cx="247" cy="454" r="16"/><circle cx="187" cy="461" r="16"/><circle cx="130" cy="444" r="16"/><circle cx="85" cy="404" r="16"/><circle cx="60" cy="350" r="16"/><circle cx="59" cy="290" r="16"/><circle cx="82" cy="235" r="16"/><circle cx="126" cy="194" r="16"/>
        </g>
        <g class="cross"><line x1="0" y1="275" x2="100%" y2="275"/><line x1="500" y1="0" x2="500" y2="100%"/><rect x="484" y="259" width="32" height="32"/></g>
      </svg>
      <div class="navbar">
        <svg viewBox="0 0 32 240"><path d="M23 2h6v5h-6zM6 24l10-5 10 5v12l-10 5-10-5zM6 24l10 4 10-4M16 28v13M6 60V48h20v12q-1 8-10 8T6 60z"/><circle cx="16" cy="58" r="6"/><path d="M2 84h28M2 192h28"/><path d="M12 110L5 101q0-3 3-1l4 3-3-9q2-2 3 0l3 6v-9q2-2 3 0v9l3-7q2-1 2 1l-1 9 3-4q3 0 1 4l-4 6-3 3zM5 118l14 16M19 118L5 134M5 122v-4h4M15 118h4v4M5 130v4h4"/><circle cx="21" cy="132" r="5"/><path d="M25 136l4 4" stroke-width="3"/><path d="M16 154v24M12 159l4-4 4 4M14 172q-9-2-8-6t12-4 9 6-5 4M9 174l-4-4 5-2M4 197h6v6H4zM13 197h6v6h-6zM22 197h6v6h-6zM4 206h17v13H4zM9 209v7l6-4z"/><circle cx="26" cy="234" r="3"/><path d="M13 76h6l-3 3zM13 147h6l-3 3zM13 185h6l-3 3z" fill="#2b2b2b"/></svg>
      </div>
      <div class="cmd">
        <i class="cgrip"></i>
        <button aria-label="关闭命令行"><svg class="i x" viewBox="0 0 12 12"><path d="M2 2l8 8M10 2l-8 8" stroke-width="2"/></svg></button>
        <button aria-label="自定义" class="wrench"><svg class="i s" viewBox="0 0 16 16"><path d="M2 12l6-6q-1-4 4-5l-1 3 2 1 2-2q0 6-5 5l-6 6q-3 0-2-2z"/></svg></button>
        <label class="prompt"><svg viewBox="0 0 28 16"><path d="M1 2h15v12H1zM1 4h15M3 6l3 3-3 2M8 12h5" fill="none" stroke="#444"/><path d="M19 7h8l-4 4z" fill="#444"/></svg><input type="text" aria-label="命令" placeholder="键入命令"></label>
        <svg class="t up"><use href="#tri"/></svg>
      </div>
    </div>

    <aside class="side right">
      <div class="vbar">
        <i class="hgrip"></i>
        <button aria-label="删除"><svg class="i" viewBox="0 0 32 32"><path d="M13 19L32 0v11L19 25z" fill="#fbb23c" stroke="none"/><path d="M10 22l3-3 6 6-4 3z" fill="#fff" stroke="none"/><circle cx="10" cy="26" r="4" fill="#ee4b33" stroke="none"/><path d="M0 31h6"/><path d="M16 31h16" class="b"/></svg></button>
        <button aria-label="复制对象"><svg class="i" viewBox="0 0 32 32"><circle cx="7" cy="7" r="7"/><path d="M16 3h8v7" class="ak1"/><g class="b"><circle cx="14" cy="24" r="7"/><path d="M21 19a7 7 0 1 1 0 10"/></g></svg></button>
        <button aria-label="镜像"><svg class="i" viewBox="0 0 32 32"><path d="M14 3v27H1z"/><path d="M17 3v27h14z" class="b"/></svg></button>
        <button aria-label="偏移"><svg class="i" viewBox="0 0 32 32"><path d="M32 4H12C-4 5-4 27 12 27h20" class="b"/><path d="M32 10H13c-9 0-9 12 0 12h19"/></svg></button>
        <button aria-label="阵列"><svg class="i" viewBox="0 0 32 32"><circle cx="6" cy="10" r="4"/><g class="b"><circle cx="16" cy="4" r="4"/><circle cx="26" cy="10" r="4"/><circle cx="6" cy="21" r="4"/><circle cx="16" cy="27" r="4"/><circle cx="26" cy="21" r="4"/></g><path d="M32 28v4h-4z" class="k"/></svg></button>
        <button aria-label="移动"><svg class="i" viewBox="0 0 32 32"><path d="M15 7h2v8h8v2h-8v8h-2v-8H7v-2h8zM16 0l5 8H11zM16 32l-5-8h10zM0 16l8-5v10zM32 16l-8 5V11z" class="k"/></svg></button>
        <button aria-label="旋转"><svg class="i" viewBox="0 0 32 32"><path d="M20 4A14 14 0 1 0 30 16" stroke="#333"/><path d="M14 1l9 3-8 4z" class="k"/></svg></button>
        <button aria-label="缩放"><svg class="i" viewBox="0 0 32 32"><path d="M0 14V1h31v31H19" class="b"/><path d="M0 15h17v17H0z"/></svg></button>
        <button aria-label="拉伸"><svg class="i" viewBox="0 0 32 32"><path d="M0 1h14v31H0z"/><path d="M17 1h5l9 31H16" class="b"/><path d="M9 25h12" class="ak1"/></svg></button>
        <button aria-label="修剪"><svg class="i" viewBox="0 0 32 32"><path d="M0 3h18M24 3h8" class="b" stroke-dasharray="5 3"/><path d="M20 2v20M9 8l13 14" stroke="#333" stroke-width="3"/><circle cx="18" cy="26" r="4" stroke="#333" stroke-width="2"/><circle cx="26" cy="24" r="4" stroke="#333" stroke-width="2"/></svg></button>
        <button aria-label="延伸"><svg class="i" viewBox="0 0 32 32"><path d="M31 3v24M0 19h8"/><path d="M10 19h20" class="b" stroke-dasharray="4 2"/><path d="M9 13h18" class="ak1"/></svg></button>
        <button aria-label="打断于点"><svg class="i" viewBox="0 0 32 32"><path d="M20 6H1v20h30V6h-5"/><path d="M23 3v7" class="b"/></svg></button>
        <button aria-label="打断"><svg class="i" viewBox="0 0 32 32"><path d="M8 7H1v20h30V7h-8"/><path d="M10 3v8M21 3v8" class="b"/></svg></button>
        <button aria-label="合并"><svg class="i" viewBox="0 0 32 32"><path d="M0 15h12M20 15h12"/><path d="M10 12l6 3-6 4zM22 12l-6 3 6 4z" fill="#1c7fd8" stroke="none"/></svg></button>
        <button aria-label="倒角"><svg class="i" viewBox="0 0 32 32"><path d="M0 32V19M19 1h13"/><path d="M1 17L17 2" class="b"/></svg></button>
        <button aria-label="圆角"><svg class="i" viewBox="0 0 32 32"><path d="M0 32V20M20 1h12"/><path d="M0 18Q2 2 18 1" class="b"/></svg></button>
        <button aria-label="光顺曲线"><svg class="i" viewBox="0 0 32 32"><path d="M0 32q0-9 2-13M29 16q3-6 3-15"/><path d="M2 17C8 2 14 15 18 20S26 26 30 17" class="b"/></svg></button>
        <button aria-label="分解"><svg class="i" viewBox="0 0 32 32"><path d="M3 12h18v18H3z"/><path d="M4 8l7-7h17l-6 7zM24 11l7-7v17l-7 8zM0 12v18" class="b"/></svg></button>
      </div>
      <div class="vbar rest">
        <i class="hgrip"></i>
        <button aria-label="前置"><svg class="i" viewBox="0 0 32 32"><path d="M5 11H0V1h16v6M28 22h4v10H16v-6"/><path d="M6 9h20v15H6z" class="f"/></svg></button>
        <button aria-label="后置"><svg class="i" viewBox="0 0 32 32"><path d="M6 8h20v16H6z" class="f"/><path d="M0 1h16v10H0zM16 22h16v10H16z" fill="#f4f4f6"/></svg></button>
        <button aria-label="置于对象之上"><svg class="i" viewBox="0 0 32 32"><path d="M0 20V5h18v6"/><path d="M12 13h20v12H12z" class="f"/></svg></button>
      </div>
    </aside>
  </section>

  <footer class="status">
    <nav class="layouts"><button class="on">模型</button><button>布局1</button><button>布局2</button><button aria-label="新建布局"><svg class="i x" viewBox="0 0 12 12"><path d="M6 2v8M2 6h8" stroke-width="2"/></svg></button></nav>
    <div class="tools">
      <button class="st">模型</button>
      <button class="st" aria-label="栅格"><svg class="i s" viewBox="0 0 16 16"><path d="M4 0v16M8 0v16M12 0v16M0 4h16M0 9h16"/></svg></button>
      <button class="st" aria-label="捕捉"><svg class="i s" viewBox="0 0 16 16"><path d="M1 4h14M1 9h14" stroke-dasharray="2 4" stroke-width="2"/></svg><svg class="t"><use href="#tri"/></svg></button>
      <button class="st" aria-label="正交"><svg class="i s" viewBox="0 0 16 16"><path d="M3 0v11h6"/></svg></button>
      <button class="st" aria-label="极轴"><svg class="i s" viewBox="0 0 16 16"><circle cx="7" cy="9" r="6"/><path d="M7 9h9M7 9l7-7"/></svg><svg class="t"><use href="#tri"/></svg></button>
      <button class="st" aria-label="等轴测"><svg class="i s" viewBox="0 0 16 16"><path d="M2 1l12 12" stroke="#a33"/><path d="M8 2v13" stroke="#387"/></svg><svg class="t"><use href="#tri"/></svg></button>
      <button class="st sel" aria-label="追踪"><svg class="i s" viewBox="0 0 16 16"><path d="M15 1L1 13h15"/><path d="M6 6h4v4H6z" class="g"/></svg></button>
      <button class="st sel" aria-label="对象捕捉"><svg class="i s" viewBox="0 0 16 16"><path d="M5 4h10v10H3V7"/><path d="M1 1h4v4H1z"/></svg></button>
      <svg class="t"><use href="#tri"/></svg>
      <button class="st sel" aria-label="注释"><svg class="i s" viewBox="0 0 16 16"><path d="M7 0l3 8 3 4H1l3-4z" class="g"/><circle cx="13" cy="4" r="2"/></svg></button>
      <button class="st" aria-label="注释比例"><svg class="i s" viewBox="0 0 16 16"><path d="M7 0l3 8 3 4H1l3-4z" class="g"/></svg></button>
      <div class="more"><button class="st" aria-label="切换工作空间"><svg class="i s" viewBox="0 0 16 16"><circle cx="8" cy="8" r="4"/><path d="M8 1v3M3 4l2 2M13 4l-2 2"/></svg></button><button class="st" aria-label="注释监视器"><svg class="i s" viewBox="0 0 16 16"><path d="M8 1v12M2 7h12"/></svg></button><button class="st" aria-label="单位"><svg class="i s" viewBox="0 0 16 16"><path d="M1 2h6v12H1z"/></svg></button><button class="st sel" aria-label="硬件加速"><svg class="i s" viewBox="0 0 16 16"><circle cx="8" cy="9" r="7"/></svg></button><button class="st" aria-label="全屏"><svg class="i s" viewBox="0 0 16 16"><path d="M1 3h14v11H1z"/></svg></button></div>
    </div>
  </footer>
</main>

<button class="note"><svg viewBox="0 0 20 20"><path d="M2 18l1-6L13 2l5 5L8 17zM11 4l5 5M3 12l5 5" fill="none" stroke="#fff"/></svg>笔记</button>
<p class="subtitle">那么首先，我先绘制一条直线</p>

<section class="player">
  <div class="track" role="progressbar" aria-label="播放进度" aria-valuenow="51"><div class="buffer" style="width:77.500%"></div><div class="played" style="width:50.700%"><i class="knob"></i></div></div>
  <div class="strip"></div>
  <div class="controls">
    <button aria-label="暂停"><svg class="c18" viewBox="0 0 18 16"><path d="M0 0h3v16H0zM14 0h3v16h-3z" fill="#fff"/></svg></button>
    <button aria-label="下一个"><svg class="c18" viewBox="0 0 18 16"><path d="M0 0l12 8-12 8zM13 0h3v16h-3z" fill="#fff"/></svg></button>
    <button class="five" aria-label="后退5秒"><svg><use href="#clock"/></svg><span>5</span></button>
    <button class="five fwd" aria-label="前进5秒"><svg><use href="#clock"/></svg><span>5</span></button>
    <span class="time">4:59 / 9:51</span>
    <div class="opts"><button>目录</button><button>全高清</button></div>
  </div>
</section>

<div class="huke" aria-label="虎课网"><svg viewBox="0 0 64 48"><path d="M16 3H8q-6 1-6 8v22q0 11 11 11h38q11 0 11-11V11q0-7-6-8h-8M27 6h14M24 15h20M34 0v15M2 26h12M2 34h12M50 26h12M50 34h12M27 23l13 8-13 7z"/></svg><span>虎课网</span></div>
<a class="brand" href="#">
  <svg viewBox="0 0 66 60"><ellipse cx="34" cy="30" rx="31" ry="28" fill="#0b6b3a"/><ellipse cx="31" cy="30" rx="31" ry="29" fill="#8cc51f"/><ellipse cx="30" cy="29" rx="26" ry="25" fill="#fff"/><ellipse cx="40" cy="29" rx="19" ry="23" fill="#8cc51f"/><path d="M46 12l3 3M51 18l3 3M52 28l4-1M52 36l4 1M49 43l3 3M46 24l2 4M46 36l3 2" stroke="#fff" stroke-width="2"/><path d="M30 54C12 52 4 38 7 19c5-3 9-1 13 2 10 2 22 0 28-3 6 16-2 34-18 36z" fill="#e8186f"/><path d="M28 37C18 31 13 22 16 13q4-7 14 0 10-8 14 0c2 9-5 17-16 24z" fill="#e60012"/><path d="M22 9q6-6 14 0l-6 5z" fill="#f7828a"/><path d="M14 14c1 13 6 20 15 26q5 7 1 14M45 14c-2 11-8 18-16 24M30 13c-7 5-9 9-9 15" fill="none" stroke="#b5d44c"/></svg>
  <div class="words"><strong>鸿果手游网</strong><span>w w w . changguozchu . c o m</span></div>
</a>
</body>
</html>
```
FILE: styles.css
```css
* { box-sizing: border-box; }
html, body { height: 100%; margin: 0; }
body {
  display: flex; flex-direction: column; position: relative; overflow: hidden;
  font: 12px/16px "Noto Sans", "Noto Sans CJK SC", sans-serif; color: #555;
  background: linear-gradient(90deg, #f6d8c0 0, #f0e4e0 25%, #dfe5ee 60%, #0b6f7e 75%, #005468 100%);
}
button { border: 0; padding: 0; margin: 0; background: none; font: inherit; color: inherit; display: flex; align-items: center; justify-content: center; }
input, select { font: inherit; border-radius: 0; }
i { font-style: normal; }
.defs { position: absolute; width: 0; height: 0; }

/* icon strokes and fills */
.i { width: 32px; height: 32px; flex: none; fill: none; stroke: #646464; stroke-width: 1.3; overflow: visible; }
.s { width: 16px; height: 16px; }
.qat .s { stroke-width: 2; }
.x { width: 12px; height: 12px; }
.n { stroke: #3b3b4d; stroke-width: 1.3; }
.t { width: 8px; height: 8px; flex: none; color: #666; }
.turn { transform: rotate(-90deg); }
.up { transform: rotate(180deg); }
.flip { transform: scaleX(-1); }
.g { fill: #6a6a6a; stroke: none; }
.k { fill: #2d2d2d; stroke: none; }
.o { fill: #ffa200; stroke: none; }
.f { fill: #5aa5ea; stroke: none; }
.q { fill: #2b7fc4; stroke: none; }
.b { stroke: #1c7fd8; }
.ab1 { marker-end: url(#ab); }
.ab2 { marker-start: url(#ab); marker-end: url(#ab); }
.ag1 { marker-end: url(#ag); }
.ag2 { marker-start: url(#ag); marker-end: url(#ag); }
.ak1 { stroke: #2d2d2d; marker-end: url(#ak); }
.am2 { marker-start: url(#am); marker-end: url(#am); }

.app { flex: 1; min-height: 0; display: flex; flex-direction: column; margin: 2px 3px 0; padding: 0 4px 0 3px; background: #f4f4f6; overflow: hidden; }

/* title bar */
.titlebar { display: flex; flex: none; height: 50px; background: #d9d9dc; border-bottom: 1px solid #f4f4f6; }
.logo { flex: none; width: 41px; height: 41px; margin-top: 4px; border: 1px solid #000; background: linear-gradient(#c4c4c6, #6f6f71); }
.logo svg { width: 39px; height: 39px; }
.bars { flex: 1; min-width: 0; display: flex; flex-direction: column; }
.topbar { display: flex; height: 29px; align-items: center; }
.qat { display: flex; gap: 8px; padding-left: 9px; align-items: center; }
.qat .mini { width: 7px; margin: 0 -2px; }
.dim { opacity: .4; }
.title { flex: 1; margin: 0; display: flex; justify-content: center; gap: 16px; font-size: 12px; line-height: 16px; font-weight: 400; color: #444; white-space: nowrap; }
.info { display: flex; align-items: center; height: 27px; border-bottom: 1px solid #b9b9bc; }
.search { width: 179px; height: 21px; margin: 0 5px 0 3px; border: 1px solid #eee; background: #fff; padding: 0 4px; font-size: 11px; font-style: italic; }
.search::placeholder { color: #666; opacity: 1; }
.login { width: 104px; margin-left: 8px; gap: 5px; justify-content: flex-start; }
.apps { display: flex; align-items: center; gap: 8px; margin: 0 15px 0 9px; }
.help { margin-right: 5px; }
.win { display: flex; gap: 13px; margin: 0 7px 0 67px; }
.menu { flex: 1; display: flex; align-items: center; gap: 25px; padding-left: 14px; color: #6b6b6b; white-space: nowrap; }
.mdi { display: flex; gap: 6px; margin-left: auto; padding-right: 3px; }

/* drawing tabs */
.tabs { display: flex; flex: none; height: 24px; padding-top: 2px; background: #d9d9dc; margin-bottom: 4px; padding-left: 18px; }
.tab { width: 128px; padding-left: 14px; justify-content: flex-start; border-radius: 10px 10px 0 0; background: #e4e4e5; color: #666; }
.tab.on { width: 124px; padding: 0 14px 0 9px; justify-content: space-between; background: #f4f4f6; color: #333; }
.add { width: 20px; height: 14px; margin: 5px 0 0 6px; border-radius: 6px; background: #ebebec; }

/* docked toolbars */
.docks { display: flex; flex-direction: column; gap: 3px; margin-bottom: 4px; flex: none; }
.row { display: flex; gap: 1px; }
.row.tight { gap: 0; }
.bar { display: flex; flex: none; height: 40px; border: 1px solid #bcbcbf; align-items: flex-start; }
.bar.grow { flex: 1; border-right: 0; min-width: 0; overflow: hidden; }
.grip { width: 4px; height: 14px; margin: 3px 2px 0; background: repeating-linear-gradient(#777 0 1px, transparent 1px 2px); opacity: .8; }
.tb { flex: none; width: 39px; height: 32px; margin-top: 3px; padding: 0 4px 0 3px; }
.wide { flex: none; width: 48px; height: 32px; margin-top: 3px; }
.w48 { width: 48px; }
.sep { flex: none; width: 6px; height: 34px; margin-top: 2px; background: linear-gradient(#888, #888) 2px 0 / 1px 100% no-repeat; }
.sep.w7 { width: 7px; }
.combo { position: relative; flex: none; height: 36px; margin-top: 1px; border-left: 1px solid transparent; }
.combo::after { content: ""; position: absolute; left: 1px; bottom: 0; width: 1px; height: 10px; background: #888; }
.combo select {
  appearance: none; display: block; width: 100%; height: 26px; padding: 0 24px 2px 0; border: 1px solid #b4b4b6; border-top-color: #a6a6a8; color: #111;
  background: #e0e0e1 url("data:image/svg+xml,%3Csvg xmlns='http://www.w3.org/2000/svg' width='8' height='6'%3E%3Cpath d='M0 0l4 5 4-5' fill='none' stroke='%23555'/%3E%3C/svg%3E") right 3px center no-repeat;
}
.combo.low select { height: 22px; padding-bottom: 0; }
.combo.low::after { height: 13px; }
.combo select:disabled { background-color: #c9c9cb; color: #808080; opacity: 1; }
.combo select.bare { background-image: none; padding: 0; }
.w119 { width: 119px; } .w125 { width: 125px; } .w149 { width: 149px; } .w159 { width: 159px; }
.w299 { width: 299px; margin-right: 1px; }
.last { flex: 1; }
.p4 select { padding-left: 3px; } .p9 select { padding-left: 7px; } .p18 select { padding-left: 17px; }
.p44 select { padding-left: 43px; } .p70 select { padding-left: 68px; }
.layer select { padding-left: 96px; }
.lay { position: absolute; left: 1px; top: 1px; width: 90px; height: 20px; overflow: visible; }
.chip { position: absolute; left: 1px; top: 4px; width: 14px; height: 14px; }
.line { position: absolute; left: 4px; top: 10px; height: 2px; }
.l60 { width: 60px; } .l35 { width: 35px; }

/* workspace */
.work { flex: 1; min-height: 0; display: flex; }
.side { flex: none; width: 45px; overflow: hidden; }
.side.right { width: 48px; padding-left: 4px; }
.vbar { width: 41px; padding: 0 3px 2px; border: 1px solid #b9b5c2; display: flex; flex-direction: column; gap: 6px; }
.vbar.rest { margin-top: 1px; }
.hgrip { width: 14px; height: 3px; margin: 3px 0 -1px; background: repeating-linear-gradient(90deg, #777 0 1px, transparent 1px 2px); flex: none; opacity: .8; }
.vbar button { height: 32px; flex: none; justify-content: flex-start; }
.canvas { position: relative; flex: 1; min-width: 0; background: #000; overflow: hidden; }
.drawing { display: block; width: 100%; height: 100%; fill: none; }
.circles { stroke: #c9cb55; stroke-width: 1.2; }
.cross { stroke: #e6e6e6; shape-rendering: crispEdges; }
.cross rect { fill: #000; }
.navbar { position: absolute; right: 4px; top: 3px; width: 32px; height: 240px; border-radius: 3px; background: #484848; }
.navbar svg { width: 32px; height: 240px; fill: none; stroke: #2b2b2b; }
.cmd { position: absolute; left: 362px; right: 362px; bottom: 0; height: 27px; display: flex; align-items: center; background: #b2b2b2; border-radius: 2px 2px 0 0; color: #444; padding: 0 5px 2px 0; }
.cgrip { width: 5px; height: 18px; margin: 0 4px; background: repeating-linear-gradient(#555 0 2px, transparent 2px 4px); }
.wrench { margin: 0 6px 0 8px; }
.prompt { flex: 1; display: flex; height: 25px; align-items: center; gap: 6px; }
.prompt svg { width: 28px; height: 16px; }
.prompt input { flex: 1; min-width: 0; border: 0; background: none; padding: 0; font-style: italic; font-size: 13px; }
.prompt input::placeholder { color: #666; opacity: 1; }

/* status bar */
.status { flex: none; height: 17px; display: flex; justify-content: space-between; background: #d9d9dc; overflow: hidden; border-top: 1px solid #c8c8cb; }
.layouts { display: flex; padding-left: 11px; color: #777; }
.layouts button { height: 16px; padding: 0 9px; border-radius: 0 0 8px 8px; background: #e3e3e5; margin-right: 3px; }
.layouts .on { padding: 0 12px; margin-right: 2px; background: #f4f4f6; color: #333; font-weight: 500; }
.tools { display: flex; height: 24px; gap: 2px; align-items: flex-start; padding-right: 2px; }
.tools > .t { margin: 10px 4px 0; }
.st { height: 23px; margin-top: 2px; padding: 0 3px; gap: 6px; background: #f0f0f2; color: #444; }
.tools > .st:first-child { height: 16px; margin-top: 1px; padding: 0 2px; }
.st.sel { padding: 0 2px; background: #cfe1f8; border: 1px solid #5a7fb8; }
.more { display: flex; gap: 14px; padding-left: 70px; background: #f0f0f2; height: 24px; }

/* video player layer */
.player { flex: none; background: #000; color: #fff; }
.track { position: relative; height: 6px; background: #808080; }
.buffer, .played { position: absolute; left: 0; top: 0; height: 6px; }
.buffer { background: #7b8a9e; }
.played { background: #ffd600; }
.knob { position: absolute; right: -5px; top: -2px; width: 9px; height: 9px; border-radius: 5px; background: #fff; }
.strip { height: 7px; background: #434343; }
.controls { display: flex; height: 43px; padding: 0 0 7px 17px; align-items: center; gap: 19px; font-size: 14px; }
.c18 { width: 18px; height: 16px; }
.five { position: relative; width: 16px; height: 16px; margin-right: 3px; }
.five svg { width: 16px; height: 16px; }
.five.fwd svg { transform: scaleX(-1); }
.five span { position: absolute; inset: 1px 0 0; font: bold 9px/16px "Liberation Sans", sans-serif; text-align: center; }
.time { font: 14px/16px "Liberation Sans", sans-serif; }
.opts { display: flex; gap: 10px; margin-left: auto; padding-right: 240px; }
.subtitle { position: absolute; left: 0; right: 0; bottom: 62px; margin: 0; text-align: center; font-size: 38px; line-height: 44px; color: #fff; -webkit-text-stroke: 4px #111; paint-order: stroke fill; pointer-events: none; }
.note { position: absolute; right: 25px; top: 540px; width: 50px; height: 50px; flex-direction: column; gap: 2px; padding-top: 2px; border: 1px solid #777; border-radius: 4px; background: rgba(0, 0, 0, .5); color: #fff; }
.note svg { width: 20px; height: 20px; }
.huke { position: absolute; right: 8px; top: 9px; display: flex; gap: 2px; align-items: center; opacity: .8; pointer-events: none; }
.huke svg { width: 64px; height: 48px; fill: none; stroke: #e8e8ea; stroke-width: 3; filter: drop-shadow(0 0 1px #888); }
.huke span { font-size: 46px; line-height: 48px; color: #e8e8ea; -webkit-text-stroke: 2px #aaa; paint-order: stroke fill; }
.brand { position: absolute; right: 0; bottom: 0; width: 250px; height: 65px; background: #fff; display: flex; color: #222; text-decoration: none; }
.brand svg { width: 66px; height: 60px; margin: 1px 0 0 -6px; flex: none; }
.words { flex: 1; display: flex; flex-direction: column; align-items: center; padding-right: 10px; }
.words strong { font: 900 36px/48px "Noto Sans CJK SC", sans-serif; white-space: nowrap; }
.words span { position: relative; font: bold 11px/12px "Liberation Mono", monospace; white-space: nowrap; }
.words span::after { content: ""; position: absolute; left: -6px; right: -2px; top: 6px; height: 1px; background: #222; }
```
